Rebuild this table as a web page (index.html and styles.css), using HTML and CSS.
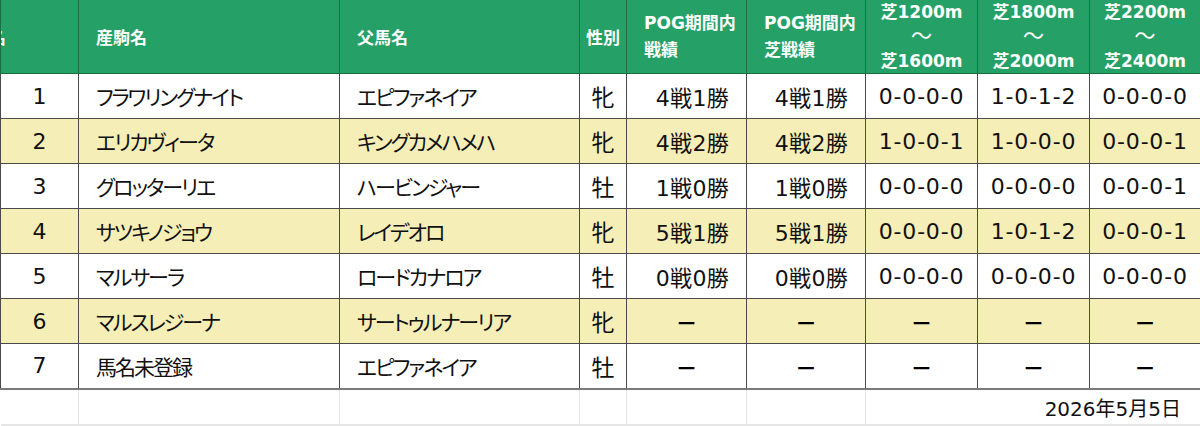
FILE: index.html
```html
<!DOCTYPE html>
<html lang="ja">
<head>
<meta charset="utf-8">
<link rel="stylesheet" href="styles.css">
</head>
<body>
<table class="pog">
  <colgroup>
    <col class="c-no"><col class="c-name"><col class="c-sire"><col class="c-sex">
    <col class="c-rec"><col class="c-rec2"><col class="c-dist"><col class="c-dist"><col class="c-dist3">
  </colgroup>
  <thead>
    <tr class="head">
      <th class="h-no"><span class="cut">馬名</span></th>
      <th class="h-left">産駒名</th>
      <th class="h-left">父馬名</th>
      <th class="h-center">性別</th>
      <th class="h-pog">POG期間内<br>戦績</th>
      <th class="h-pog">POG期間内<br>芝戦績</th>
      <th class="h-dist">芝1200m<br><span class="tilde">～</span><br>芝1600m</th>
      <th class="h-dist">芝1800m<br><span class="tilde">～</span><br>芝2000m</th>
      <th class="h-dist">芝2200m<br><span class="tilde">～</span><br>芝2400m</th>
    </tr>
  </thead>
  <tbody>
    <tr class="row">
      <td class="num">1</td><td class="left">フラワリングナイト</td><td class="left">エピファネイア</td><td class="sex">牝</td>
      <td class="right">4戦1勝</td><td class="right">4戦1勝</td><td class="rec">0-0-0-0</td><td class="rec">1-0-1-2</td><td class="rec">0-0-0-0</td>
    </tr>
    <tr class="row alt">
      <td class="num">2</td><td class="left">エリカヴィータ</td><td class="left">キングカメハメハ</td><td class="sex">牝</td>
      <td class="right">4戦2勝</td><td class="right">4戦2勝</td><td class="rec">1-0-0-1</td><td class="rec">1-0-0-0</td><td class="rec">0-0-0-1</td>
    </tr>
    <tr class="row">
      <td class="num">3</td><td class="left">グロッターリエ</td><td class="left">ハービンジャー</td><td class="sex">牡</td>
      <td class="right">1戦0勝</td><td class="right">1戦0勝</td><td class="rec">0-0-0-0</td><td class="rec">0-0-0-0</td><td class="rec">0-0-0-1</td>
    </tr>
    <tr class="row alt">
      <td class="num">4</td><td class="left">サツキノジョウ</td><td class="left">レイデオロ</td><td class="sex">牝</td>
      <td class="right">5戦1勝</td><td class="right">5戦1勝</td><td class="rec">0-0-0-0</td><td class="rec">1-0-1-2</td><td class="rec">0-0-0-1</td>
    </tr>
    <tr class="row">
      <td class="num">5</td><td class="left">マルサーラ</td><td class="left">ロードカナロア</td><td class="sex">牡</td>
      <td class="right">0戦0勝</td><td class="right">0戦0勝</td><td class="rec">0-0-0-0</td><td class="rec">0-0-0-0</td><td class="rec">0-0-0-0</td>
    </tr>
    <tr class="row alt">
      <td class="num">6</td><td class="left">マルスレジーナ</td><td class="left">サートゥルナーリア</td><td class="sex">牝</td>
      <td class="dash">－</td><td class="dash">－</td><td class="dash">－</td><td class="dash">－</td><td class="dash">－</td>
    </tr>
    <tr class="row last">
      <td class="num">7</td><td class="left">馬名未登録</td><td class="left">エピファネイア</td><td class="sex">牡</td>
      <td class="dash">－</td><td class="dash">－</td><td class="dash">－</td><td class="dash">－</td><td class="dash">－</td>
    </tr>
    <tr class="foot">
      <td></td><td></td><td></td><td></td><td></td><td></td>
      <td class="date" colspan="3">2026年5月5日</td>
    </tr>
  </tbody>
</table>
</body>
</html>
```

FILE: styles.css
```css
html, body {
  margin: 0;
  padding: 0;
  background: #ffffff;
}

body {
  width: 1200px;
  height: 426px;
  overflow: hidden;
  font-family: "DejaVu Sans", "Noto Sans CJK JP", sans-serif;
  color: #111111;
}

.pog {
  width: 1200px;
  table-layout: fixed;
  border-collapse: collapse;
}

.c-no { width: 78px; }
.c-name { width: 261px; }
.c-sire { width: 240px; }
.c-sex { width: 47px; }
.c-rec { width: 120px; }
.c-rec2 { width: 119px; }
.c-dist { width: 112px; }
.c-dist3 { width: 111px; }

.head {
  height: 73px;
  background: #25a066;
}

.head th {
  color: #ffffff;
  font-weight: bold;
  font-size: 17px;
  border: 1px solid #1c6e45;
  border-top: none;
  padding: 0;
  vertical-align: middle;
  overflow: hidden;
  white-space: nowrap;
  font-feature-settings: "palt";
}

.h-no {
  text-align: left;
}

.cut {
  display: inline-block;
  margin-left: -29px;
}

.h-left {
  text-align: left;
  padding-left: 17px !important;
}

.h-center {
  text-align: center;
}

.h-pog {
  text-align: left;
  padding-left: 17px !important;
  line-height: 27px;
}

.h-dist {
  text-align: center;
  line-height: 24px;
}

.tilde {
  font-weight: normal;
  font-size: 21px;
  line-height: 24px;
}

.row {
  height: 45px;
  background: #ffffff;
}

.row.alt {
  background: #f6eeb7;
}

.row td {
  border: 1px solid #4a4a4a;
  font-size: 22px;
  padding: 0;
  white-space: nowrap;
  overflow: hidden;
}

.row.last td {
  border-bottom: 2px solid #7a7a7a;
}

.num {
  text-align: center;
}

.sex {
  text-align: center;
  font-size: 23px !important;
}

.left {
  text-align: left;
  padding-left: 17px !important;
  font-size: 21px !important;
  letter-spacing: -2px;
  font-feature-settings: "palt";
}

.right {
  text-align: right;
  padding-right: 17px !important;
  letter-spacing: 0.3px;
}

.rec {
  text-align: center;
  letter-spacing: 0.8px;
}

.dash {
  text-align: center;
  font-family: "Noto Sans CJK JP", sans-serif;
  font-weight: bold;
  font-size: 22px !important;
  color: #000000;
}

.foot {
  height: 36px;
}

.foot td {
  border-right: 1px solid #e2e2e2;
  border-bottom: 2px solid #e6e6e6;
  padding: 0;
}

.foot .date {
  text-align: right;
  padding-right: 19px;
  font-size: 20px;
  padding-top: 2px;
}
```
